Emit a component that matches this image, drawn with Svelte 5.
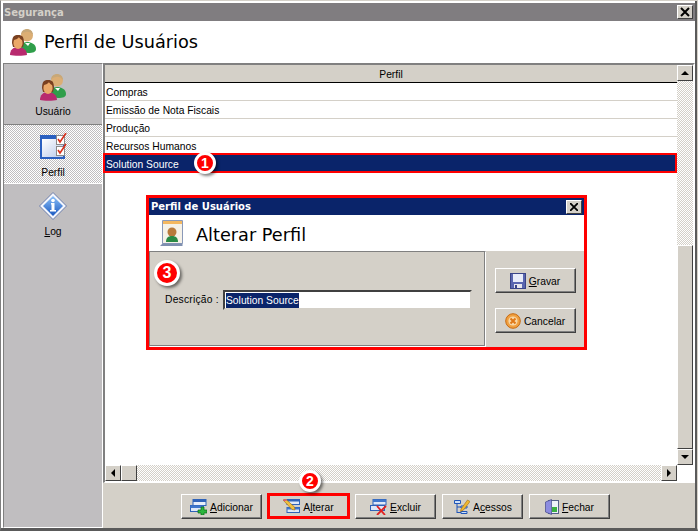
<script>
  const rows = ['Compras', 'Emissão de Nota Fiscais', 'Produção', 'Recursos Humanos', 'Solution Source'];
</script>

{#snippet users()}
  <svg width="28" height="28" viewBox="0 0 28 28">
    <path d="M11 24c0-7 3-10 7-10s9 2 9 7c0 3-3 4-8 4z" fill="#2f9e4a" />
    <path d="M16 15l3 3 2-3z" fill="#fff" />
    <circle cx="18" cy="7.5" r="6" fill="#dcae74" />
    <path d="M12 7c0-4 3-6 6-6s6 2 6 6c-2-3-5-4-7-3-2 0-4 1-5 3z" fill="#c8a878" />
    <path d="M1 27c0-5 3-8 8-8s9 3 9 8c-3 1-14 1-17 0z" fill="#b82a6e" />
    <path d="M3 15c0-6 2-8 6-8s6 2 6 8l-1 4H4z" fill="#7a4020" />
    <ellipse cx="9" cy="15" rx="4.6" ry="6" fill="#eba868" />
    <path d="M4 12c2 0 5-1 6-3 1 2 2 3 4 3V9l-4-2-5 1z" fill="#7a4020" />
  </svg>
{/snippet}

<div class="window">
  <div class="titlebar">
    <span>Segurança</span>
    <button class="close">
      <svg width="10" height="10" viewBox="0 0 10 10"><path d="M1 1l8 8M9 1l-8 8" stroke="#000" stroke-width="2" /></svg>
    </button>
  </div>

  <div class="header">
    {@render users()}
    <h1>Perfil de Usuários</h1>
  </div>

  <div class="body">
    <nav class="side">
      <div class="nav-item user">
        {@render users()}
        <span>Usuário</span>
      </div>
      <div class="nav-item perfil">
        <svg width="28" height="28" viewBox="0 0 28 28">
          <defs>
            <linearGradient id="pf" x1="0" y1="0" x2="1" y2="1">
              <stop offset="0" stop-color="#ffffff" />
              <stop offset="1" stop-color="#b8c8ea" />
            </linearGradient>
          </defs>
          <rect x="1" y="2" width="25" height="24" fill="#2a5fc0" />
          <rect x="3" y="6" width="21" height="18" fill="url(#pf)" />
          <rect x="17.5" y="2.5" width="8" height="9" fill="#fff" stroke="#8a8a8a" />
          <rect x="17.5" y="13.5" width="8" height="9" fill="#fff" stroke="#8a8a8a" />
          <path d="M19 6l2 3 6-9M19 17l2 3 6-9" fill="none" stroke="#d8301c" stroke-width="1.6" />
        </svg>
        <span>Perfil</span>
      </div>
      <div class="nav-item log">
        <svg width="28" height="28" viewBox="0 0 28 28">
          <defs>
            <linearGradient id="lg" x1="0" y1="0" x2="0" y2="1">
              <stop offset="0" stop-color="#8cc0f8" />
              <stop offset="1" stop-color="#1a58c0" />
            </linearGradient>
          </defs>
          <path d="M14 .5L27.5 14 14 27.5.5 14z" fill="#f4f6fc" stroke="#6a7ca8" />
          <path d="M14 4l10 10-10 10L4 14z" fill="url(#lg)" />
          <path d="M12 11h3.5v7H17v1.5h-6V18h1.5v-5.500H12z" fill="#fff" />
          <circle cx="14" cy="8.500" r="1.800" fill="#fff" />
        </svg>
        <span><u>L</u>og</span>
      </div>
    </nav>

    <div class="content">
      <div class="grid">
        <div class="grid-main">
          <div class="grid-inner">
            <div class="grid-head">Perfil</div>
            <div class="grid-rows">
              {#each rows as row, i}
                <div class="row" class:selected={i === rows.length - 1}>{row}</div>
              {/each}
            </div>
            <div class="hscroll">
              <button class="sb"><i class="arr left"></i></button>
              <button class="sb"></button>
              <div class="track"></div>
              <button class="sb"><i class="arr right"></i></button>
            </div>
          </div>
          <div class="vscroll">
            <button class="sb"><i class="arr up"></i></button>
            <div class="track"></div>
            <div class="vthumb"></div>
            <button class="sb"><i class="arr down"></i></button>
          </div>
        </div>
      </div>

      <div class="toolbar">
        <button class="btn">
          <svg width="17" height="16" viewBox="0 0 17 16">
            <rect x="3" y="0.500" width="13" height="6" fill="#e8eefa" stroke="#2f62b8" />
            <rect x="3" y="0.500" width="13" height="2.500" fill="#2f62b8" />
            <rect x="0.500" y="6.500" width="13" height="6" fill="#dfe8f8" stroke="#2f62b8" />
            <rect x="0.500" y="6.500" width="13" height="2.500" fill="#3f76cc" />
            <path d="M11 8h3v3h3v3h-3v2h-3v-2H8v-3h3z" fill="#2cb53e" stroke="#0a6a18" stroke-width=".7" />
          </svg>
          <span><u>A</u>dicionar</span>
        </button>
        <button class="btn">
          <svg width="17" height="16" viewBox="0 0 17 16">
            <rect x="4" y="0.500" width="12.500" height="5" fill="#dfe8f8" stroke="#2f62b8" />
            <rect x="4" y="0.500" width="12.500" height="2" fill="#2f62b8" />
            <rect x="4" y="8.500" width="12.500" height="5" fill="#dfe8f8" stroke="#2f62b8" />
            <rect x="4" y="8.500" width="12.500" height="2" fill="#3f76cc" />
            <path d="M0 1l2.500-1 9 8 .5 3-3-.5z" fill="#f0c040" stroke="#a06a10" stroke-width=".6" />
            <path d="M0 1l2.500-1 1.500 1.300-2.500 1z" fill="#e0507a" />
          </svg>
          <span>A<u>l</u>terar</span>
        </button>
        <button class="btn">
          <svg width="17" height="16" viewBox="0 0 17 16">
            <rect x="3" y="0.500" width="13" height="5.500" fill="#dfe8f8" stroke="#2f62b8" />
            <rect x="3" y="0.500" width="13" height="2.500" fill="#3f76cc" />
            <rect x="0.500" y="6.500" width="14" height="5" fill="#dfe8f8" stroke="#2f62b8" />
            <path d="M7 7l8 9M16 7l-9 9" stroke="#e02020" stroke-width="1.800" />
          </svg>
          <span><u>E</u>xcluir</span>
        </button>
        <button class="btn">
          <svg width="17" height="16" viewBox="0 0 17 16">
            <path d="M1.500 1.500h6v3h-6zM4 4.500v9.500M4 8h4M4 13.500h4M8 7h6v2H8zM8 12.500h6v2H8z" fill="#cfe0f6" stroke="#1f55b8" />
            <path d="M8 10l6.500-9L17 2.500 10.500 11l-3 1.500z" fill="#f0b830" stroke="#a06a10" stroke-width=".6" />
          </svg>
          <span>A<u>c</u>essos</span>
        </button>
        <button class="btn">
          <svg width="14" height="16" viewBox="0 0 14 16">
            <rect x="3.500" y="1.500" width="10" height="13" fill="#eef2fa" stroke="#55608a" />
            <rect x="7" y="8" width="5" height="5" fill="#3cb043" />
            <path d="M0.500 3L6.500 .5v15L.5 13z" fill="#8c8ce0" stroke="#44488a" stroke-width=".7" />
          </svg>
          <span><u>F</u>echar</span>
        </button>
      </div>
    </div>
  </div>

  <div class="dialog">
    <div class="dlg-title">
      <span>Perfil de Usuários</span>
      <button class="close">
        <svg width="8" height="8" viewBox="0 0 8 8"><path d="M0 0l8 8M8 0l-8 8" stroke="#000" stroke-width="1.800" /></svg>
      </button>
    </div>
    <div class="dlg-head">
      <svg width="23" height="27" viewBox="0 0 23 27">
        <path d="M2.500 .5h20v23h-20z" fill="#f6f2e8" stroke="#8a99b8" />
        <rect x="3" y="1" width="19" height="3" fill="#f4b860" />
        <path d="M0 26l2.500-2.500h20V26z" fill="#7f8fb0" />
        <circle cx="12" cy="12" r="4.500" fill="#b87a3c" />
        <path d="M6 22c0-4 2-6 6-6s6 2 6 6z" fill="#2a8a44" />
      </svg>
      <h2>Alterar Perfil</h2>
    </div>
    <div class="dlg-body">
      <div class="dlg-form">
        <label for="descricao">Descrição :</label>
        <div class="input" id="descricao"><span class="sel">Solution Source</span></div>
      </div>
      <div class="dlg-actions">
        <button class="btn">
          <svg width="16" height="16" viewBox="0 0 16 16">
            <rect x="0.500" y="0.500" width="15" height="15" fill="#5a66b0" stroke="#3a4488" />
            <rect x="3" y="1" width="10" height="8" fill="#e8ecfa" />
            <rect x="4" y="11" width="8" height="4" fill="#e8e8ee" />
            <rect x="5" y="12" width="2" height="3" fill="#3a4488" />
          </svg>
          <span><u>G</u>ravar</span>
        </button>
        <button class="btn">
          <svg width="16" height="16" viewBox="0 0 16 16">
            <circle cx="8" cy="8" r="7.300" fill="#f0a040" stroke="#c86a10" />
            <circle cx="8" cy="8" r="4.600" fill="#f8d8a8" />
            <path d="M5.500 5.500l5 5M10.500 5.500l-5 5" stroke="#e07818" stroke-width="2" />
          </svg>
          <span>Cancelar</span>
        </button>
      </div>
    </div>
  </div>

  <!-- callouts lying over everything -->
  <div class="mark mark-row"></div>
  <div class="mark mark-btn"></div>
  <div class="badge b1">1</div>
  <div class="badge b2">2</div>
  <div class="badge b3">3</div>
</div>

<style>
  :global(body) {
    margin: 0;
    background: #fff;
  }

  button {
    padding: 0;
    font: inherit;
    color: inherit;
  }

  .window {
    position: relative;
    width: 698px;
    height: 531px;
    box-sizing: border-box;
    display: flex;
    flex-direction: column;
    overflow: hidden;
    background: #fff;
    border-top: 1px solid #d4d0c8;
    border-left: 1px solid #808080;
    border-right: 1px solid #d4d0c8;
    border-bottom: 3px solid #5a5a5a;
    padding: 2px 2px 0 2px;
    box-shadow: inset -2px 0 0 #5a5a5a;
    font-family: "Liberation Sans", Tahoma, sans-serif;
    font-size: 10.3px;
    color: #000;
  }

  .titlebar {
    height: 18px;
    flex: none;
    display: flex;
    align-items: center;
    justify-content: space-between;
    padding: 0 2px 0 1px;
    background: #807d80;
    color: #d4d0c8;
    font-family: "DejaVu Sans", sans-serif;
    font-weight: bold;
    font-size: 10px;
  }

  .close {
    width: 16px;
    height: 14px;
    display: flex;
    align-items: center;
    justify-content: center;
    background: #d4d0c8;
    border: 1px solid;
    border-color: #fff #404040 #404040 #fff;
  }

  .header {
    height: 42px;
    flex: none;
    display: flex;
    align-items: center;
    gap: 7px;
    padding-left: 6px;
    background: #fff;
  }

  h1,
  h2 {
    margin: 0;
    font-family: "DejaVu Sans", sans-serif;
    font-weight: normal;
    font-size: 17.7px;
  }

  h2 {
    padding-top: 4px;
  }

  .body {
    flex: 1;
    min-height: 0;
    display: flex;
    background: #d4d0c8;
  }

  .side {
    width: 100px;
    flex: none;
    box-sizing: border-box;
    border: 1px solid;
    border-color: #808080 #fff #fff #808080;
    background: #c0bec0;
  }

  .nav-item {
    display: flex;
    flex-direction: column;
    align-items: center;
    gap: 6px;
    box-sizing: border-box;
  }

  .user {
    height: 61px;
    padding-top: 9px;
    gap: 5px;
    border-bottom: 1px solid #808080;
  }

  .perfil {
    height: 59px;
    padding-top: 8px;
    background: repeating-conic-gradient(#c0bec0 0 25%, #fff 0 50%) 0 0 / 2px 2px;
    border-bottom: 1px solid #fff;
  }

  .log {
    padding-top: 8px;
  }

  .content {
    flex: 1;
    min-width: 0;
    display: flex;
    flex-direction: column;
  }

  .grid {
    height: 420px;
    flex: none;
    box-sizing: border-box;
    border-top: 2px solid #808080;
    border-left: 2px solid #808080;
    border-right: 2px solid #fff;
    border-bottom: 1px solid #fff;
    background: #fff;
  }

  .grid-main {
    height: 100%;
    display: flex;
  }

  .grid-inner {
    flex: 1;
    min-width: 0;
    display: flex;
    flex-direction: column;
  }

  .grid-head {
    height: 16px;
    flex: none;
    display: flex;
    align-items: center;
    justify-content: center;
    padding-top: 1px;
    background: #d4d0c8;
    border-bottom: 1px solid #000;
  }

  .grid-rows {
    flex: 1;
  }

  .row {
    height: 17px;
    line-height: 20px;
    padding-left: 1px;
    border-bottom: 1px solid #d4d0c8;
  }

  .row.selected {
    background: #0a246a;
    color: #fff;
    border-bottom: 0;
  }

  .hscroll {
    height: 16px;
    flex: none;
    display: flex;
    margin-bottom: 1px;
  }

  .vscroll {
    width: 16px;
    flex: none;
    display: flex;
    flex-direction: column;
    padding-bottom: 17px;
  }

  .sb {
    width: 16px;
    height: 16px;
    flex: none;
    display: flex;
    align-items: center;
    justify-content: center;
    background: #d4d0c8;
    border: 1px solid;
    border-color: #fff #404040 #404040 #fff;
  }

  .track {
    flex: 1;
    background: repeating-conic-gradient(#d4d0c8 0 25%, #fff 0 50%) 0 0 / 2px 2px;
  }

  .vthumb {
    height: 204px;
    flex: none;
    box-sizing: border-box;
    background: #d4d0c8;
    border: 1px solid;
    border-color: #fff #404040 #404040 #fff;
  }

  .arr {
    width: 0;
    height: 0;
    border: 4px solid transparent;
  }

  .arr.up {
    border-bottom-color: #000;
    border-top-width: 0;
  }

  .arr.down {
    border-top-color: #000;
    border-bottom-width: 0;
  }

  .arr.left {
    border-right-color: #000;
    border-left-width: 0;
  }

  .arr.right {
    border-left-color: #000;
    border-right-width: 0;
  }

  .toolbar {
    flex: 1;
    display: flex;
    align-items: center;
    justify-content: center;
    gap: 6px;
    padding: 2px 7px 0 0;
  }

  .btn {
    width: 81px;
    height: 25px;
    display: flex;
    align-items: center;
    justify-content: center;
    gap: 3px;
    background: #d4d0c8;
    border: 1px solid;
    border-color: #fff #404040 #404040 #fff;
    box-shadow: inset -1px -1px 0 #808080;
  }

  .btn span {
    padding-top: 2px;
  }

  .mark {
    position: absolute;
    box-sizing: border-box;
    border: 2px solid #ff0000;
  }

  .mark-row {
    left: 102px;
    top: 152px;
    width: 574px;
    height: 20px;
  }

  .mark-btn {
    left: 266px;
    top: 492px;
    width: 83px;
    height: 26px;
    border-width: 3px;
  }

  .badge {
    position: absolute;
    width: 22px;
    height: 22px;
    box-sizing: border-box;
    border: 3px solid #fff;
    border-radius: 50%;
    background: #ff0000;
    color: #fff;
    font-weight: bold;
    font-size: 14px;
    line-height: 16px;
    text-align: center;
    box-shadow: 2px 2px 3px rgba(0, 0, 0, 0.5);
  }

  .b1 {
    left: 193px;
    top: 151px;
  }

  .b2 {
    left: 298px;
    top: 469px;
  }

  .b3 {
    left: 153px;
    top: 259px;
    width: 26px;
    height: 26px;
    line-height: 20px;
    font-size: 16px;
  }

  .dialog {
    position: absolute;
    left: 145px;
    top: 194px;
    width: 441px;
    height: 155px;
    box-sizing: border-box;
    border: 3px solid #ff0000;
    background: #d4d0c8;
    display: flex;
    flex-direction: column;
  }

  .dlg-title {
    height: 17px;
    flex: none;
    display: flex;
    align-items: center;
    justify-content: space-between;
    padding: 0 2px;
    background: #0a246a;
    color: #fff;
    font-family: "DejaVu Sans", sans-serif;
    font-size: 10px;
    font-weight: bold;
  }

  .dlg-head {
    height: 36px;
    flex: none;
    display: flex;
    align-items: center;
    gap: 13px;
    padding-left: 11px;
    background: #fff;
  }

  .dlg-body {
    flex: 1;
    display: flex;
  }

  .dlg-form {
    width: 337px;
    box-sizing: border-box;
    border: 1px solid;
    border-color: #808080 #fff #fff #808080;
    box-shadow: inset -1px -1px 0 #808080;
    display: flex;
    gap: 3px;
    padding: 38px 0 0 15px;
  }

  label {
    width: 55px;
    flex: none;
    line-height: 20px;
    height: 20px;
    letter-spacing: 0.2px;
    white-space: nowrap;
  }

  .input {
    width: 249px;
    height: 20px;
    box-sizing: border-box;
    background: #fff;
    border: 2px solid;
    border-color: #404040 #d4d0c8 #d4d0c8 #404040;
    padding: 1px;
    line-height: 15px;
  }

  .sel {
    display: inline-block;
    background: #0a246a;
    color: #fff;
  }

  .dlg-actions {
    flex: 1;
    display: flex;
    flex-direction: column;
    align-items: center;
    gap: 15px;
    padding-top: 17px;
  }
</style>
